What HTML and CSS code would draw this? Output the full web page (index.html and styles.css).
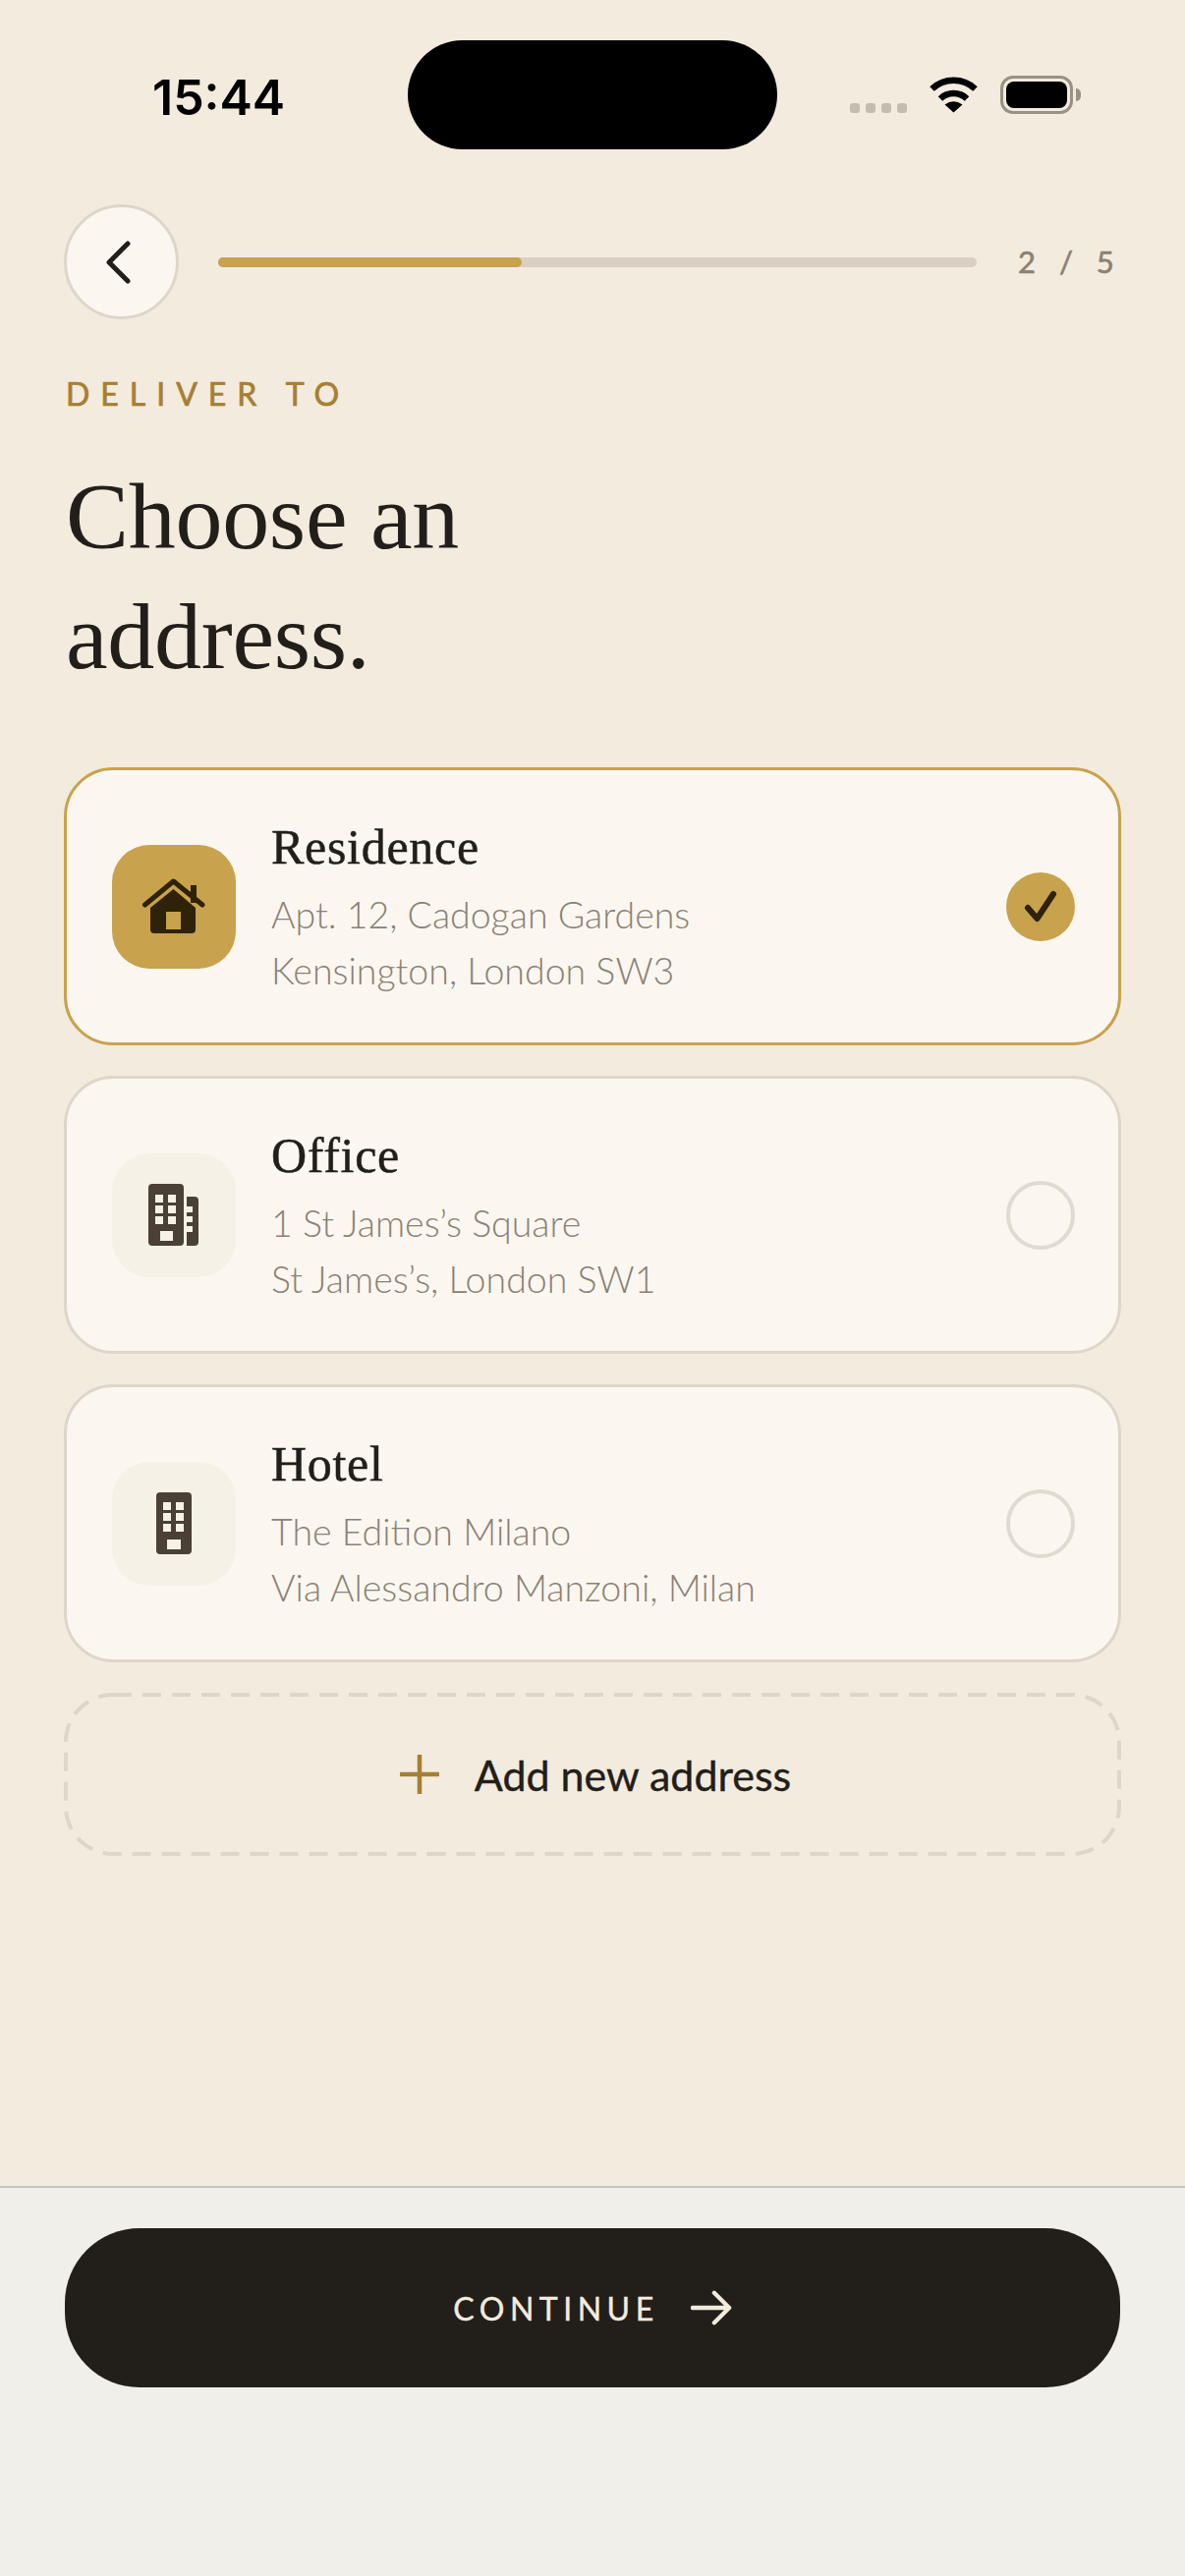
FILE: index.html
```html
<!DOCTYPE html>
<html>
  <head>
    <title>Choose an address</title>
    <meta name="viewport" content="width=device-width, initial-scale=1.0">
    <link rel="stylesheet" href="styles.css">
  </head>
  <body>
    <div class="phone">
      <div class="status-bar">
        <div class="status-time">15:44</div>
        <div class="status-island"></div>
        <div class="status-icons">
          <div class="signal-dots">
            <span class="signal-dot"></span>
            <span class="signal-dot"></span>
            <span class="signal-dot"></span>
            <span class="signal-dot"></span>
          </div>
          <svg class="wifi-icon" width="51" height="38" viewBox="0 0 51 38">
            <path d="M3.5 13.5A32 32 0 0 1 47.5 13.5" fill="none" stroke="#000" stroke-width="6.5"/>
            <path d="M12 23.5A19.5 19.5 0 0 1 39 23.5" fill="none" stroke="#000" stroke-width="6.5"/>
            <path d="M25.5 37.5L16.5 29.5Q25.5 23 34.5 29.5Z" fill="#000"/>
          </svg>
          <div class="battery">
            <div class="battery-fill"></div>
            <div class="battery-nub"></div>
          </div>
        </div>
      </div>

      <div class="top-bar">
        <button class="back-button">
          <svg class="back-icon" width="30" height="44" viewBox="0 0 30 44">
            <path d="M25 3L6 22L25 41" fill="none" stroke="#221e1a" stroke-width="5" stroke-linecap="round" stroke-linejoin="round"/>
          </svg>
        </button>
        <div class="progress-track">
          <div class="progress-fill"></div>
        </div>
        <div class="progress-label">2 / 5</div>
      </div>

      <main class="content">
        <div class="eyebrow">DELIVER TO</div>
        <h1 class="page-title">Choose an<br>address.</h1>

        <div class="address-list">
          <div class="address-card address-card-selected">
            <div class="address-tile address-tile-selected">
              <svg width="64" height="58" viewBox="0 0 64 58">
                <path d="M49 7h6v18h-6z" fill="#2e2208"/>
                <path d="M2.5 27L31.5 3L61 27" fill="none" stroke="#2e2208" stroke-width="5" stroke-linecap="round" stroke-linejoin="round"/>
                <path d="M31.5 11L54 30V52a4 4 0 0 1-4 4H12a4 4 0 0 1-4-4V30Z" fill="#2e2208"/>
                <rect x="24" y="34" width="15" height="18" fill="#c8a24c"/>
              </svg>
            </div>
            <div class="address-text">
              <div class="address-name">Residence</div>
              <div class="address-line">Apt. 12, Cadogan Gardens</div>
              <div class="address-line">Kensington, London SW3</div>
            </div>
            <div class="radio radio-selected">
              <svg width="34" height="33" viewBox="0 0 34 33">
                <path d="M4 18L13.5 29L30 4" fill="none" stroke="#2e2208" stroke-width="6" stroke-linecap="round" stroke-linejoin="round"/>
              </svg>
            </div>
          </div>

          <div class="address-card">
            <div class="address-tile">
              <svg width="52" height="63" viewBox="0 0 52 63">
                <rect width="36" height="63" rx="4" fill="#4a4036"/>
                <path d="M7 11h8v8H7zM20 11h8v8h-8zM7 22h8v8H7zM20 22h8v8h-8zM7 33h8v8H7zM20 33h8v8h-8zM12 48h13v10H12z" fill="#f6f1e6"/>
                <path d="M39 13h8a4 4 0 0 1 4 4v42a4 4 0 0 1-4 4h-8z" fill="#4a4036"/>
                <path d="M39 23h6v6h-6zM39 33h6v6h-6zM39 43h6v6h-6z" fill="#f6f1e6"/>
              </svg>
            </div>
            <div class="address-text">
              <div class="address-name">Office</div>
              <div class="address-line">1 St James’s Square</div>
              <div class="address-line">St James’s, London SW1</div>
            </div>
            <div class="radio"></div>
          </div>

          <div class="address-card">
            <div class="address-tile">
              <svg width="36" height="63" viewBox="0 0 36 63">
                <rect width="36" height="63" rx="4" fill="#4a4036"/>
                <path d="M7 10h8v8H7zM20 10h8v8h-8zM7 21h8v8H7zM20 21h8v8h-8zM7 32h8v8H7zM20 32h8v8h-8zM11 48h14v10H11z" fill="#f6f1e6"/>
              </svg>
            </div>
            <div class="address-text">
              <div class="address-name">Hotel</div>
              <div class="address-line">The Edition Milano</div>
              <div class="address-line">Via Alessandro Manzoni, Milan</div>
            </div>
            <div class="radio"></div>
          </div>

          <div class="add-address">
            <svg class="add-address-border" width="1076" height="166" viewBox="0 0 1076 166">
              <rect x="2" y="2" width="1072" height="162" rx="48" fill="none" stroke="#ddd6c9" stroke-width="4" stroke-dasharray="19 11"/>
            </svg>
            <svg width="40" height="40" viewBox="0 0 40 40">
              <path d="M20 1V39M1 20H39" fill="none" stroke="#a67f33" stroke-width="4.5" stroke-linecap="round"/>
            </svg>
            <span class="add-address-label">Add new address</span>
          </div>
        </div>
      </main>

      <div class="footer">
        <button class="continue-button">
          <span class="continue-label">CONTINUE</span>
          <svg width="42" height="36" viewBox="0 0 44 36">
            <path d="M2 18H41M25 2L41 18L25 34" fill="none" stroke="#f3ebde" stroke-width="4.5" stroke-linecap="round" stroke-linejoin="round"/>
          </svg>
        </button>
      </div>
    </div>
  </body>
</html>
```

FILE: styles.css
```css
body{
  margin: 0;
  background-color: #f3ebde;
  font-family: "Lato", "Noto Sans", sans-serif;
  color: #221e1a;
}

.phone{
  display: flex;
  flex-direction: column;
  height: 2622px;
  overflow: hidden;
}

/* status bar */
.status-bar{
  display: flex;
  align-items: center;
  padding: 41px 114px 0 155px;
}
.status-time{
  width: 260px;
  font-family: "Inter", sans-serif;
  font-size: 50px;
  font-weight: 600;
  line-height: 60px;
  color: #000;
  margin-top: 5px;
}
.status-island{
  width: 376px;
  height: 111px;
  border-radius: 56px;
  background-color: #000;
}
.status-icons{
  display: flex;
  align-items: center;
  margin-left: auto;
  gap: 22px;
  margin-top: -1px;
}
.signal-dots{
  display: flex;
  gap: 6px;
  margin-top: 27px;
}
.signal-dot{
  width: 10px;
  height: 10px;
  border-radius: 3px;
  background-color: #c4bcb0;
}
.battery{
  position: relative;
  box-sizing: border-box;
  width: 74px;
  height: 39px;
  padding: 3px;
  border: 3px solid #999184;
  border-radius: 13px;
}
.battery-fill{
  height: 27px;
  border-radius: 8px;
  background-color: #000;
}
.battery-nub{
  position: absolute;
  right: -11px;
  top: 10px;
  width: 5px;
  height: 13px;
  border-radius: 0 6px 6px 0;
  background-color: #999184;
}

/* top bar */
.top-bar{
  display: flex;
  align-items: center;
  margin-top: 56px;
  padding: 0 72px 0 65px;
}
.back-button{
  display: flex;
  align-items: center;
  justify-content: center;
  box-sizing: border-box;
  width: 117px;
  height: 117px;
  padding: 0;
  border: 3px solid #ddd6c9;
  border-radius: 50%;
  background-color: #fbf7f0;
}
.back-icon{
  margin-right: 8px;
}
.progress-track{
  flex: 1;
  height: 10px;
  margin: 0 42px 0 40px;
  border-radius: 5px;
  background-color: #d9d0c3;
}
.progress-fill{
  width: 40%;
  height: 100%;
  border-radius: 5px;
  background-color: #c8a24c;
}
.progress-label{
  width: 98px;
  margin-top: -2px;
  white-space: nowrap;
  font-size: 31px;
  font-weight: 400;
  letter-spacing: 5.5px;
  word-spacing: 5px;
  -webkit-text-stroke: 0.6px #8a8175;
  color: #8a8175;
}

/* heading */
.content{
  padding: 0 65px;
}
.eyebrow{
  margin-top: 56px;
  padding-left: 2px;
  font-size: 32px;
  line-height: 40px;
  font-weight: 400;
  letter-spacing: 11px;
  -webkit-text-stroke: 0.7px #a67f33;
  color: #a67f33;
}
.page-title{
  margin: 44px 0 0 2px;
  font-family: "Liberation Serif", serif;
  font-size: 96px;
  font-weight: 400;
  line-height: 122px;
  letter-spacing: -0.3px;
  color: #221e1a;
}

/* address cards */
.address-list{
  display: flex;
  flex-direction: column;
  gap: 31px;
  margin-top: 72px;
}
.address-card{
  display: flex;
  align-items: center;
  box-sizing: border-box;
  height: 283px;
  padding: 0 44px 0 46px;
  border: 3px solid #ddd6c9;
  border-radius: 50px;
  background-color: #fbf7f0;
}
.address-card-selected{
  border-color: #c8a24c;
}
.address-tile{
  display: flex;
  align-items: center;
  justify-content: center;
  flex-shrink: 0;
  width: 126px;
  height: 126px;
  border-radius: 38px;
  background-color: #f6f1e6;
}
.address-tile-selected{
  background-color: #c8a24c;
}
.address-text{
  flex: 1;
  margin: 4px 0 0 36px;
}
.address-name{
  font-family: "Liberation Serif", serif;
  font-size: 50px;
  line-height: 56px;
  margin-bottom: 12px;
  letter-spacing: 0.7px;
  -webkit-text-stroke: 0.5px #221e1a;
  color: #221e1a;
}
.address-line{
  font-size: 37.5px;
  font-weight: 300;
  line-height: 57px;
  color: #8a8175;
}
.radio{
  box-sizing: border-box;
  display: flex;
  align-items: center;
  justify-content: center;
  width: 70px;
  height: 70px;
  border: 4px solid #e0dbd0;
  border-radius: 50%;
}
.radio-selected{
  border: none;
  background-color: #c8a24c;
}

/* add new */
.add-address{
  position: relative;
  display: flex;
  align-items: center;
  justify-content: center;
  gap: 36px;
  height: 166px;
  padding-left: 6px;
}
.add-address-border{
  position: absolute;
  left: 0;
  top: 0;
}
.add-address-label{
  font-size: 43px;
  font-weight: 400;
  -webkit-text-stroke: 0.4px #221e1a;
  color: #221e1a;
}

/* footer */
.footer{
  margin-top: auto;
  box-sizing: border-box;
  height: 397px;
  padding: 41px 66px 0;
  border-top: 2px solid #c9c5bc;
  background-color: #f0efe9;
}
.continue-button{
  display: flex;
  align-items: center;
  justify-content: center;
  gap: 32px;
  width: 100%;
  height: 162px;
  border: none;
  border-radius: 76px;
  background-color: #221e1a;
}
.continue-label{
  font-family: "Lato", sans-serif;
  font-size: 32px;
  letter-spacing: 5.5px;
  -webkit-text-stroke: 0.4px #f3ebde;
  color: #f3ebde;
}
```
